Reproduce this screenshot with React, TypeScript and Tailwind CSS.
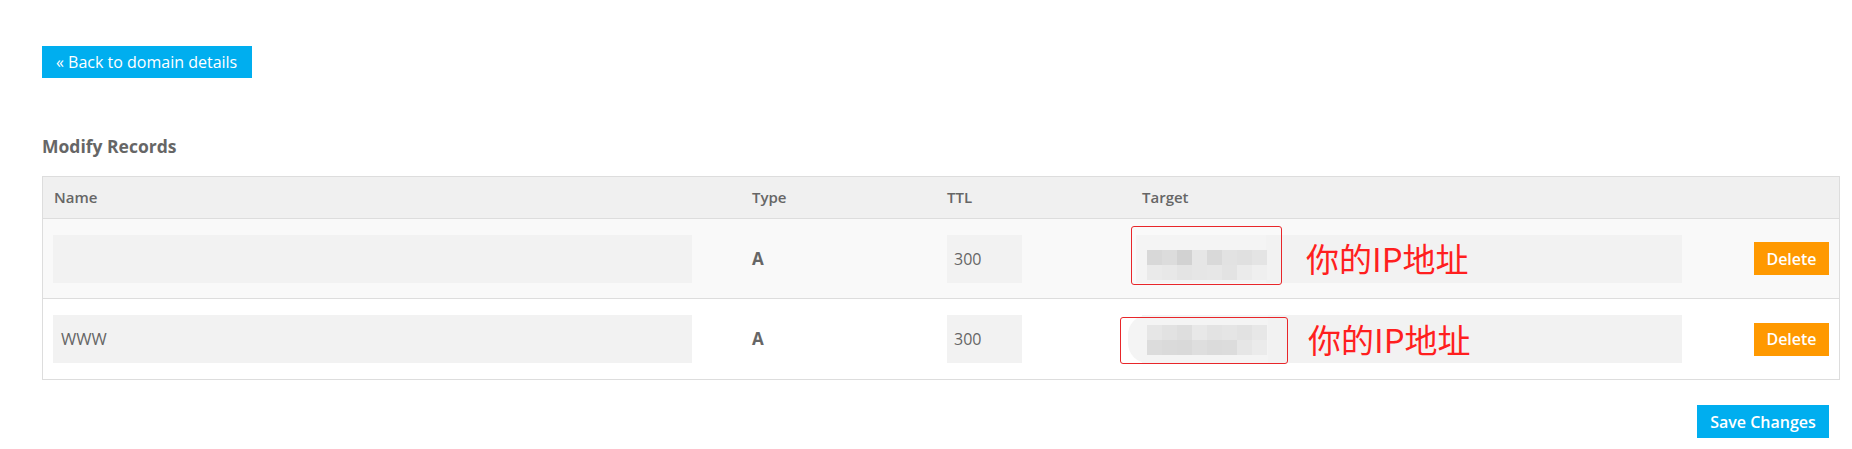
import React from "react";

const mosaic1 = [
  ["#d8d8d8", "#dcdcdc", "#d2d2d2", "#e6e6e6", "#d9d9d9", "#e2e2e2", "#e0e0e0", "#e4e4e4"],
  ["#eaeaea", "#e8e8e8", "#e4e4e4", "#e6e6e6", "#e7e7e7", "#e3e3e3", "#ebebeb", "#efefef"],
];
const mosaic2 = [
  ["#e6e6e6", "#e2e2e2", "#dedede", "#e8e8e8", "#e3e3e3", "#e5e5e5", "#e2e2e2", "#e7e7e7"],
  ["#dcdcdc", "#dadada", "#d9d9d9", "#dedede", "#dbdbdb", "#dcdcdc", "#e6e6e6", "#ebebeb"],
];

function Mosaic({ data, top }: { data: string[][]; top: string }) {
  return (
    <div className={`absolute left-[5px] ${top} flex flex-col`}>
      {data.map((row, i) => (
        <div key={i} className="flex">
          {row.map((c, j) => (
            <div key={j} className="w-[15px] h-[15px]" style={{ backgroundColor: c }} />
          ))}
        </div>
      ))}
    </div>
  );
}

function Row({
  name,
  bg,
  first,
}: {
  name: string;
  bg: string;
  first: boolean;
}) {
  return (
    <div className={`flex items-center h-[80px] ${bg} ${first ? "border-b border-[#dddddd]" : ""}`}>
      <div className="w-[698px] pl-[10px] shrink-0">
        <div className="w-[639px] h-[48px] bg-[#f2f2f2] flex items-center pl-[8px] text-[16.5px] text-[#666666]">
          {name}
        </div>
      </div>
      <div className="w-[195px] shrink-0 pl-[11px] text-[17px] font-bold text-[#666666]">A</div>
      <div className="w-[195px] shrink-0 pl-[11px]">
        <div className="w-[75px] h-[48px] bg-[#f2f2f2] flex items-center pl-[7px] text-[16px] text-[#666666]">
          300
        </div>
      </div>
      <div className="flex-1 pl-[11px]">
        <div className="relative w-[540px] h-[48px] bg-[#f2f2f2]">
          {first ? (
            <>
              <div className="absolute left-[-6px] top-[0px] w-[130px] h-[48px] bg-[#f4f4f4]" />
              <Mosaic data={mosaic1} top="top-[15px]" />
              <div className="absolute left-[-11px] top-[-9px] w-[151px] h-[59px] border border-[#e8262a] rounded-[3px]" />
              <div className="absolute left-[164px] top-[5px] text-[33px] leading-[36px] text-[#ff1f1f] font-['Noto_Sans_CJK_SC',sans-serif]">
                你的IP地址
              </div>
            </>
          ) : (
            <>
              <div className="absolute left-[-14px] top-[0px] w-[140px] h-[48px] bg-[#f4f4f4] rounded-l-[20px]" />
              <Mosaic data={mosaic2} top="top-[10px]" />
              <div className="absolute left-[-22px] top-[2px] w-[168px] h-[47px] border border-[#e8262a] rounded-[3px]" />
              <div className="absolute left-[166px] top-[6px] text-[33px] leading-[36px] text-[#ff1f1f] font-['Noto_Sans_CJK_SC',sans-serif]">
                你的IP地址
              </div>
            </>
          )}
        </div>
      </div>
      <div className="pr-[10px] shrink-0">
        <button className="w-[75px] h-[33px] bg-[#ff9900] text-white text-[16px] font-semibold flex items-center justify-center">
          Delete
        </button>
      </div>
    </div>
  );
}

export default function App() {
  return (
    <div className="w-[1852px] h-[449px] bg-white font-['Open_Sans',sans-serif] pl-[42px] pr-[12px] pt-[46px]">
      <button className="h-[32px] w-[210px] bg-[#00aeef] text-white text-[16px] pl-[14px] text-left">
        « Back to domain details
      </button>
      <div className="mt-[56px] h-[24px] leading-[24px] text-[17.5px] font-bold text-[#666666]">Modify Records</div>
      <div className="mt-[18px] border border-[#dddddd]">
        <div className="flex items-center h-[42px] bg-[#f0f0f0] border-b border-[#dddddd] text-[15px] font-semibold text-[#666666]">
          <div className="w-[698px] pl-[11px] shrink-0">Name</div>
          <div className="w-[195px] pl-[11px] shrink-0">Type</div>
          <div className="w-[195px] pl-[11px] shrink-0">TTL</div>
          <div className="flex-1 pl-[11px]">Target</div>
        </div>
        <Row name="" bg="bg-[#f9f9f9]" first={true} />
        <Row name="WWW" bg="bg-white" first={false} />
      </div>
      <div className="flex justify-end pr-[11px] mt-[25px]">
        <button className="w-[132px] h-[33px] bg-[#00aeef] text-white text-[16px] font-semibold flex items-center justify-center">
          Save Changes
        </button>
      </div>
    </div>
  );
}
